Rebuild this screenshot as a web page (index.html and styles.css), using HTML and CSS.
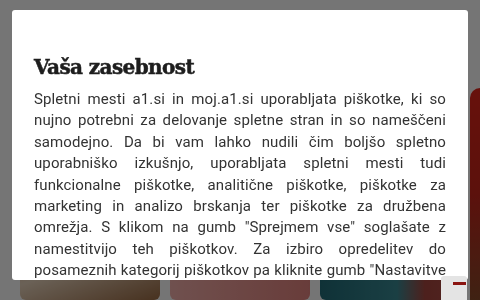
FILE: index.html
```html
<!DOCTYPE html>
<html lang="sl">

<head>
    <meta charset="UTF-8">
    <meta name="viewport" content="width=device-width, initial-scale=1.0">
    <title>A1 - Vaša zasebnost</title>
    <link rel="stylesheet" href="styles.css">
</head>

<body>
    <div class="page">
        <div class="cards">
            <div class="card card-food"></div>
            <div class="card card-pink"></div>
            <div class="card card-sea"></div>
            <div class="card card-red"></div>
        </div>
    </div>

    <div class="overlay">
        <div class="modal">
            <h1>Vaša zasebnost</h1>
            <p>Spletni mesti a1.si in moj.a1.si uporabljata piškotke, ki so nujno potrebni za delovanje spletne stran in so nameščeni samodejno. Da bi vam lahko nudili čim boljšo spletno uporabniško izkušnjo, uporabljata spletni mesti tudi funkcionalne piškotke, analitične piškotke, piškotke za marketing in analizo brskanja ter piškotke za družbena omrežja. S klikom na gumb "Sprejmem vse" soglašate z namestitvijo teh piškotkov. Za izbiro opredelitev do posameznih kategorij piškotkov pa kliknite gumb "Nastavitve piškotkov".</p>
        </div>
    </div>

    <div class="chat-tab">
        <span class="chat-bar"></span>
    </div>
</body>

</html>
```

FILE: styles.css
```css
* {
    margin: 0;
    padding: 0;
    box-sizing: border-box;
}

body {
    width: 480px;
    height: 300px;
    overflow: hidden;
    background-color: #fff;
    font-family: 'Roboto', 'Liberation Sans', sans-serif;
}

.page {
    height: 300px;
    padding: 88px 0 0 20px;
    overflow: hidden;
}

.cards {
    display: flex;
    gap: 10px;
    height: 212px;
    overflow: hidden;
}

.card {
    flex: 0 0 140px;
    border-radius: 6px;
}

.card-food {
    background: linear-gradient(160deg, #e0cdb4 0%, #b5835a 45%, #e8d4bd 75%, #9c6c45 100%);
}

.card-pink {
    background: linear-gradient(90deg, #f2b0ac 0%, #ee9e99 40%, #e3847f 100%);
}

.card-sea {
    background: linear-gradient(90deg, #226c78 0%, #3a8a94 55%, #a8463f 75%, #b24e48 100%);
}

.card-red {
    flex: 0 0 10px;
    border-radius: 14px 0 0 0;
    background: linear-gradient(180deg, #e2261c 0%, #c8261c 50%, #8a4a2a 100%);
}

.overlay {
    position: fixed;
    inset: 0;
    background-color: rgba(0, 0, 0, 0.54);
    padding: 10px 12px 20px 12px;
}

.modal {
    background-color: #fff;
    border-radius: 3px;
    height: 270px;
    overflow: hidden;
    padding: 44px 22px 0 22px;
}

h1 {
    font-family: 'DejaVu Serif', serif;
    font-weight: bold;
    font-size: 20px;
    line-height: 26px;
    color: #1e1e1e;
    letter-spacing: -0.6px;
    -webkit-text-stroke: 0.5px #1e1e1e;
    margin-bottom: 9px;
}

p {
    font-size: 15px;
    line-height: 21.4px;
    color: #333;
    text-align: justify;
    letter-spacing: 0.1px;
}

.chat-tab {
    position: fixed;
    left: 441px;
    top: 276px;
    width: 26px;
    height: 24px;
    background-color: #e4e4e4;
    border-radius: 3px 3px 0 0;
}

.chat-bar {
    display: block;
    width: 13px;
    height: 3px;
    margin: 6px 0 0 12px;
    background-color: #8a1410;
}
```
